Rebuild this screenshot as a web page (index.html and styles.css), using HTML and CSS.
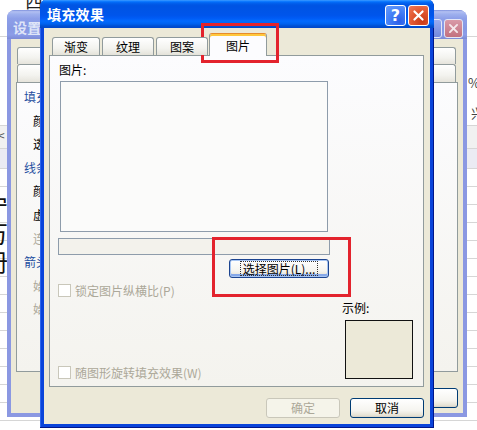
FILE: index.html
```html
<!DOCTYPE html>
<html>
<head>
<meta charset="utf-8">
<title>填充效果</title>
<link rel="stylesheet" href="styles.css">
</head>
<body>
<div class="desktop">
  <div class="sheet">
    <div class="s-row s-r1"><span class="s-top">西</span></div>
    <div class="s-row s-r2"><span></span><span class="s-right"><span>%</span><span class="s-xing">兴</span></span></div>
    <div class="s-row s-r3"><span class="s-lt">&lt;</span></div>
    <div class="s-row s-r4"></div>
    <div class="s-grid">
      <div class="s-big"><span>宁</span><span>万</span><span>册</span></div>
    </div>
  </div>

  <div class="win back">
    <div class="titlebar">
      <span class="title">设置自</span>
      <span class="tb-btns"><span class="tbtn help"></span><span class="tbtn close"><svg viewBox="0 0 19 19" width="19" height="19"><path d="M5.5 5.5 L13.5 13.5 M13.5 5.5 L5.5 13.5" stroke="#f4e6ea" stroke-width="2.2" stroke-linecap="round"/></svg></span></span>
    </div>
    <div class="wbody">
      <div class="btabrow"><span class="btab"></span><span class="btab"></span><span class="btab"></span><span class="btab"></span></div>
      <div class="btabrow"><span class="btab"></span><span class="btab"></span><span class="btab"></span></div>
      <div class="bpanel">
        <div class="bp-row grp">填充</div>
        <div class="bp-row item">颜色</div>
        <div class="bp-row item">透明</div>
        <div class="bp-row grp">线条</div>
        <div class="bp-row item">颜色</div>
        <div class="bp-row item">虚实</div>
        <div class="bp-row item dis">连接</div>
        <div class="bp-row grp">箭头</div>
        <div class="bp-row item dis">始端</div>
        <div class="bp-row item dis">始端</div>
      </div>
      <div class="bbtnrow"><button class="btn bbtn"></button><button class="btn bbtn"></button></div>
    </div>
  </div>

  <div class="win front">
    <div class="titlebar">
      <span class="title">填充效果</span>
      <span class="tb-btns"><span class="tbtn help">?</span><span class="tbtn close"><svg viewBox="0 0 21 21" width="21" height="21"><path d="M6 6 L15 15 M15 6 L6 15" stroke="#ffffff" stroke-width="2.4" stroke-linecap="round"/></svg></span></span>
    </div>
    <div class="wbody">
      <div class="tabs">
        <div class="tab t1">渐变</div>
        <div class="tab t2">纹理</div>
        <div class="tab t3">图案</div>
        <div class="tab sel">图片</div>
      </div>
      <div class="panel">
        <div class="pleft">
          <div class="lbl">图片:</div>
          <div class="picbox"></div>
          <div class="field"></div>
          <button class="btn choose"><span class="focus">选择图片(L)...</span></button>
          <div class="chk"><span class="box"></span><span>锁定图片纵横比(P)</span></div>
          <div class="chk last"><span class="box"></span><span>随图形旋转填充效果(W)</span></div>
        </div>
        <div class="pright">
          <div class="lbl">示例:</div>
          <div class="sample"></div>
        </div>
      </div>
      <div class="btnrow">
        <button class="btn fbtn dis">确定</button>
        <button class="btn fbtn">取消</button>
      </div>
    </div>
  </div>

  <div class="mark mark-tab"></div>
  <div class="mark mark-btn"></div>
</div>
</body>
</html>
```

FILE: styles.css
```css
* { box-sizing: border-box; }
html, body { margin: 0; padding: 0; }
body {
  width: 477px;
  height: 430px;
  overflow: hidden;
  background: #ffffff;
  font-family: "Noto Sans CJK SC", "Liberation Sans", sans-serif;
  font-size: 12px;
  color: #000;
}
.desktop { position: relative; width: 477px; height: 430px; overflow: hidden; }

/* background spreadsheet */
.sheet { display: flex; flex-direction: column; height: 430px; }
.s-row { flex: none; border-bottom: 1px solid #d6d6d6; display: flex; justify-content: space-between; overflow: visible; }
.s-r1 { height: 37px; }
.s-top { font-size: 18px; line-height: 18px; margin: -9px 0 0 25px; color: #222; }
.s-r2 { height: 89px; }
.s-right { display: flex; flex-direction: column; align-items: flex-end; font-size: 13px; line-height: 16px; color: #444; padding-top: 38px; margin-right: -3px; }
.s-xing { margin-top: 14px; margin-right: -4px; }
.s-r3 { height: 23px; background: #f1f1f1; }
.s-lt { color: #555; margin-left: -2px; }
.s-r4 { height: 20px; background: #ebebf3; }
.s-grid {
  flex: 1;
  background: repeating-linear-gradient(to bottom, transparent 0 17px, #d6d6d6 17px 18px);
}
.s-big { display: flex; flex-direction: column; gap: 4px; font-size: 24px; line-height: 24px; margin-left: -16px; padding-top: 24px; color: #111; }

/* windows */
.win { position: absolute; display: flex; flex-direction: column; border-radius: 8px 8px 0 0; overflow: hidden; }
.titlebar { flex: none; display: flex; justify-content: space-between; align-items: flex-start; }
.title { font-weight: bold; font-size: 14px; letter-spacing: 0.3px; color: #fff; }
.tb-btns { display: flex; gap: 2px; }
.tbtn {
  display: flex; align-items: center; justify-content: center;
  border: 1px solid #fff; border-radius: 3px;
  color: #fff; font-family: "DejaVu Sans", sans-serif; font-weight: bold;
}
.wbody { flex: 1; background: #ece9d8; display: flex; flex-direction: column; }

/* back (inactive) window */
.back {
  left: 7px; top: 10px; width: 460px; height: 407px;
  background: #8b98e2;
}
.back .titlebar {
  height: 29px; padding: 0 4px 0 6px;
  background: linear-gradient(to bottom, #7d90dc 0%, #b2c0f2 6%, #9eb0ee 14%, #8d9fe8 30%, #8698e3 65%, #8c9de8 85%, #7c8bd6 100%);
}
.back .title { color: #dfe5f8; padding-top: 8px; line-height: 18px; }
.back .tb-btns { padding-top: 9px; }
.back .tbtn { width: 19px; height: 19px; border-color: #e3e6f6; font-size: 12px; }
.back .help { background: linear-gradient(#9aabf0, #7388dc); }
.back .close { background: linear-gradient(#d99aa8, #c2707f); }
.back .wbody { margin: 0 4px 4px; padding: 8px 5px 5px 5px; }
.btabrow { display: flex; padding: 0 2px 0 1px; height: 17px; }
.btabrow + .btabrow { height: 18px; }
.btab {
  flex: 1; border: 1px solid #919b9c; border-bottom: none; border-radius: 3px 3px 0 0;
  background: linear-gradient(#ffffff, #f3f3ef 60%, #e6e4dc);
}
.bpanel {
  height: 290px; border: 1px solid #919b9c;
  background: linear-gradient(#fcfcfe, #f4f3ee);
  padding: 7px 0 0 7px; display: flex; flex-direction: column;
}
.bp-row { height: 23.6px; line-height: 14px; }
.bp-row.grp { color: #1f4f9f; }
.bp-row.item { padding-left: 9px; }
.bp-row.dis { color: #aca899; }
.bbtnrow { display: flex; justify-content: flex-end; gap: 8px; margin-top: 16px; }
.bbtn { width: 75px; height: 20px; }

/* front (active) window */
.front {
  left: 40px; top: -1px; width: 394px; height: 429px;
  background: #0a44da;
  box-shadow: inset -1px -1px 0 #00168a, inset 1px 0 0 #2c66ee;
}
.front .titlebar {
  height: 29px; padding: 0 5px 0 7px;
  background: linear-gradient(to bottom, #0058ee 0%, #3593ff 4%, #288eff 6%, #127dff 8%, #036ffc 10%, #0262ee 14%, #0057e5 20%, #0054e3 24%, #0055eb 56%, #005bf5 66%, #026afe 76%, #0062ef 86%, #0052d6 92%, #0046c8 100%);
}
.front .title { padding-top: 6px; line-height: 18px; }
.front .tb-btns { padding-top: 6px; }
.front .tbtn { width: 21px; height: 21px; font-size: 16px; }
.front .help { background: radial-gradient(circle at 70% 80%, #2a5ee8, #4a86f8 60%, #6a9cfb); }
.front .close { background: radial-gradient(circle at 70% 80%, #c93a16, #e35a34 55%, #f07a5a); }
.front .wbody { margin: 0 4px 4px; padding: 5px 6px 6px 5px; }

.tabs { display: flex; align-items: flex-end; height: 22px; padding-left: 3px; position: relative; z-index: 1; }
.tab {
  height: 18px; border: 1px solid #919b9c; border-bottom: none; border-radius: 3px 3px 0 0;
  background: linear-gradient(#ffffff, #f3f3ef 60%, #e4e2d9);
  display: flex; align-items: center; justify-content: center;
  margin-right: 2px; line-height: 14px;
}
.t1 { width: 48px; }
.t2 { width: 52px; }
.t3 { width: 52px; margin-right: 1px; }
.tab.sel {
  width: 58px; height: 23px; margin-bottom: -1px; margin-right: 0;
  background: #fcfcfe;
  border-top: 1px solid #e68b2c;
  box-shadow: inset 0 2px 0 #ffc73c;
  padding-top: 2px;
}

.panel {
  height: 332px; border: 1px solid #919b9c;
  background: linear-gradient(#fcfcfe, #f4f3ee);
  display: flex; padding: 7px 0 7px 8px;
}
.pleft { width: 272px; display: flex; flex-direction: column; }
.pright { margin-left: 12px; display: flex; flex-direction: column; justify-content: flex-end; }
.lbl { height: 14px; line-height: 14px; }
.pleft .lbl { padding-left: 1px; margin-bottom: 4px; }
.pright .lbl { margin-bottom: 5px; }
.picbox { margin-left: 2px; width: 268px; height: 151px; border: 1px solid #8e9cab; background: #fbfbfa; }
.field { margin-top: 6px; height: 17px; border: 1px solid #8e9cab; background: #f3f2ec; }
.sample { margin-left: 3px; width: 68px; height: 59px; border: 1px solid #111; background: #ece9d8; }

.chk { display: flex; align-items: center; gap: 4px; height: 13px; margin-top: 6px; color: #aca899; line-height: 13px; }
.chk .box { flex: none; width: 13px; height: 13px; border: 1px solid #c9c7ba; background: #fff; }
.chk.last { margin-top: auto; }

.btn {
  font: inherit; font-size: 12px; padding: 0; margin: 0;
  display: flex; align-items: center; justify-content: center;
  border: 1px solid #003c74; border-radius: 3px;
  background: linear-gradient(#ffffff, #f5f4ef 65%, #e6e3d6 90%, #d6d0c5);
  color: #000; line-height: 14px;
}
.choose {
  margin: 4px 0 0 171px; width: 100px; height: 19px;
  border-color: #1c448f;
  box-shadow: inset 0 0 0 1px #a8c6f3, inset 0 -2px 0 1px #86a8e8;
}
.focus { outline: 1px dotted #333; padding: 0 2px; line-height: 13px; }
.btnrow { display: flex; justify-content: flex-end; gap: 10px; margin-top: 11px; }
.fbtn { width: 74px; height: 20px; }
.btn.dis { border-color: #c9c7ba; background: #f5f4ea; color: #aca899; }

/* annotation rectangles */
.mark { position: absolute; border: 3px solid #e3232d; }
.mark-tab { left: 201px; top: 23px; width: 78px; height: 40px; }
.mark-btn { left: 212px; top: 237px; width: 139px; height: 60px; }
```
